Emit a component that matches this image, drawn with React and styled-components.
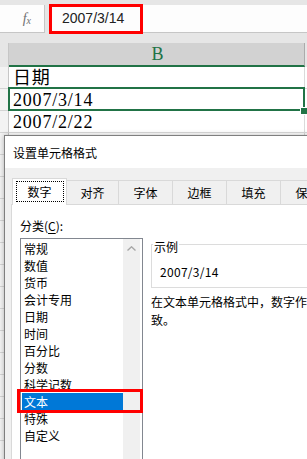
import React from 'react';
import styled, { createGlobalStyle } from 'styled-components';

const GREEN = '#217346';
const UI = '"Noto Sans CJK SC", "Microsoft YaHei", sans-serif';
const CELL = '"Liberation Serif", "Noto Sans CJK SC", serif';

const Global = createGlobalStyle`
  html, body { margin: 0; padding: 0; background: #fff; }
  body { width: 307px; height: 459px; overflow: hidden; font-family: ${UI}; }
  * { box-sizing: border-box; }
`;

const Screen = styled.div`
  position: relative;
  width: 307px;
  height: 459px;
  overflow: hidden;
  background: #fff;
`;

/* ---------- formula bar ---------- */
const Toolbar = styled.div`
  height: 43px;
  padding-top: 5px;
  background: #e6e6e6;
  display: flex;
  align-items: flex-start;
  gap: 4px;
`;

const FxBox = styled.div`
  width: 45px;
  height: 28px;
  background: #fdfdfd;
  border-right: 1px solid #c6c6c6;
  border-bottom: 1px solid #c6c6c6;
  display: flex;
  align-items: center;
  justify-content: flex-end;
  padding-right: 13px;
  font-family: "Liberation Serif", serif;
  font-style: italic;
  font-size: 14px;
  color: #707070;
`;

const FxSub = styled.span`
  font-size: 10px;
  margin-top: 4px;
`;

const InputBox = styled.div`
  position: relative;
  flex: 1;
  height: 28px;
  background: #fdfdfd;
  border-bottom: 1px solid #c6c6c6;
  padding-left: 13px;
  line-height: 27px;
  font-family: "Liberation Sans", sans-serif;
  font-size: 14px;
  color: #222;
`;

const Highlight = styled.div`
  position: absolute;
  left: 0;
  top: -1px;
  width: 94px;
  height: 30px;
  border: 3px solid #f00;
`;

/* ---------- sheet ---------- */
const HeaderRow = styled.div`
  display: flex;
  height: 24px;
  background: #e6e6e6;
`;

const Corner = styled.div`
  width: 9px;
  border-right: 1px solid #c6c6c6;
`;

const ColHead = styled.div`
  width: 296px;
  background: #d2d2d2;
  border-right: 1px solid #ababab;
  border-bottom: 2px solid ${GREEN};
  display: flex;
  align-items: center;
  justify-content: center;
  padding-left: 2px;
  font-family: "Liberation Serif", serif;
  font-size: 18px;
  color: ${GREEN};
`;

const Row = styled.div`
  display: flex;
  height: 22px;
`;

const RowHead = styled.div`
  width: 9px;
  background: #f3f3f3;
  border-right: 1px solid #c6c6c6;
  border-bottom: 1px solid #d4d4d4;
`;

const Cell = styled.div`
  position: relative;
  width: 296px;
  border-right: 1px solid #dadada;
  border-bottom: 1px solid #dadada;
  padding: 1px 0 0 4px;
  font-family: ${CELL};
  font-size: 18px;
  letter-spacing: 0.8px;
  line-height: 21px;
  color: #000;
  white-space: nowrap;

  ${(p) =>
    p.$selected &&
    `
    &::after {
      content: '';
      position: absolute;
      left: -1px;
      top: -2px;
      right: -1px;
      bottom: -1px;
      border: 2px solid ${GREEN};
    }
  `}
`;

const FillHandle = styled.span`
  position: absolute;
  right: -3px;
  bottom: -4px;
  width: 6px;
  height: 6px;
  background: ${GREEN};
  outline: 1px solid #fff;
  z-index: 1;
`;

const NextCol = styled.div`
  flex: 1;
  border-bottom: 1px solid #dadada;
`;

/* ---------- dialog ---------- */
const Dialog = styled.div`
  position: absolute;
  left: 4px;
  top: 135px;
  width: 330px;
  height: 360px;
  border: 1px solid #7f7f7f;
  background: #f0f0f0;
  box-shadow: 0 0 5px rgba(0, 0, 0, 0.28);
  display: flex;
  flex-direction: column;
`;

const TitleBar = styled.div`
  height: 32px;
  background: #fff;
  padding-left: 8px;
  display: flex;
  align-items: center;
  font-size: 12px;
  color: #000;
`;

const Body = styled.div`
  flex: 1;
  padding: 10px 0 0 6px;
  display: flex;
  flex-direction: column;
`;

const TabStrip = styled.div`
  display: flex;
  align-items: flex-end;
  height: 26px;
  padding-left: 1px;
`;

const Tab = styled.div`
  position: relative;
  width: ${(p) => p.$w}px;
  height: ${(p) => (p.$active ? 27 : 24)}px;
  margin-left: ${(p) => (p.$first ? 0 : -1)}px;
  margin-bottom: ${(p) => (p.$active ? -1 : 0)}px;
  z-index: ${(p) => (p.$active ? 1 : 0)};
  background: ${(p) => (p.$active ? '#fff' : '#f0f0f0')};
  border: 1px solid #d9d9d9;
  border-bottom: none;
  display: flex;
  justify-content: center;
  align-items: ${(p) => (p.$active ? 'flex-start' : 'center')};
  padding-top: ${(p) => (p.$active ? 2 : 0)}px;
  font-size: 12px;
  color: #000;
  flex-shrink: 0;
`;

const FocusRing = styled.span`
  width: 48px;
  height: 21px;
  border: 1px dotted #000;
  display: flex;
  align-items: center;
  justify-content: center;
`;

const Panel = styled.div`
  flex: 1;
  background: #fff;
  border: 1px solid #d9d9d9;
  border-right: none;
  padding: 13px 0 0 8px;
  display: flex;
  gap: 8px;
`;

const LeftCol = styled.div`
  width: 123px;
  flex-shrink: 0;
  display: flex;
  flex-direction: column;
`;

const FieldLabel = styled.div`
  font-size: 12px;
  line-height: 16px;
  color: #000;
  u { text-decoration-thickness: 1px; text-underline-offset: 2px; }
`;

const ListBox = styled.div`
  margin-top: 4px;
  height: 240px;
  border: 1px solid #828790;
  background: #fff;
  display: flex;
  padding-right: 2px;
`;

const Items = styled.div`
  width: 102px;
  padding: 1px 0 0 1px;
`;

const Item = styled.div`
  position: relative;
  height: 17px;
  line-height: 17px;
  padding-left: 2px;
  font-size: 12px;
  color: ${(p) => (p.$selected ? '#fff' : '#000')};
  background: ${(p) => (p.$selected ? '#0078d7' : 'transparent')};
  z-index: ${(p) => (p.$selected ? 2 : 0)};

  ${(p) =>
    p.$selected &&
    `
    &::after {
      content: '';
      position: absolute;
      left: -5px;
      top: -4px;
      right: -20px;
      bottom: -3px;
      border: 3px solid #f00;
    }
  `}
`;

const ScrollTrack = styled.div`
  width: 17px;
  background: #f0f0f0;
  display: flex;
  justify-content: center;
  padding-top: 7px;
`;

const RightCol = styled.div`
  flex: 1;
  min-width: 0;
  padding-top: 26px;
`;

const GroupBox = styled.div`
  position: relative;
  height: 44px;
  border: 1px solid #dcdcdc;
  border-right: none;
  padding: 19px 0 0 8px;
  font-size: 12px;
  line-height: 16px;
  letter-spacing: 0.3px;
  color: #000;
`;

const GroupLegend = styled.span`
  position: absolute;
  left: 1px;
  top: -5px;
  padding: 0 1px;
  background: #fff;
  font-size: 12px;
  line-height: 14px;
  letter-spacing: 0;
`;

const Description = styled.div`
  margin-top: 5px;
  font-size: 12px;
  line-height: 18px;
  color: #000;
  white-space: nowrap;
`;

const categories = [
  '常规', '数值', '货币', '会计专用', '日期', '时间',
  '百分比', '分数', '科学记数', '文本', '特殊', '自定义',
];

const tabs = [
  { label: '数字', w: 55 },
  { label: '对齐', w: 53 },
  { label: '字体', w: 55 },
  { label: '边框', w: 55 },
  { label: '填充', w: 55 },
  { label: '保护', w: 55 },
];

const cells = ['日期', '2007/3/14', '2007/2/22', '', '', '', '', '', '', '', '', '', '', '', '', '', '', ''];

export default function App() {
  return (
    <Screen>
      <Global />
      <Toolbar>
        <FxBox>
          f<FxSub>x</FxSub>
        </FxBox>
        <InputBox>
          2007/3/14
          <Highlight />
        </InputBox>
      </Toolbar>

      <HeaderRow>
        <Corner />
        <ColHead>B</ColHead>
      </HeaderRow>

      {cells.map((text, i) => (
        <Row key={i}>
          <RowHead />
          <Cell $selected={i === 1}>
            {text}
            {i === 1 && <FillHandle />}
          </Cell>
          <NextCol />
        </Row>
      ))}

      <Dialog>
        <TitleBar>设置单元格格式</TitleBar>
        <Body>
          <TabStrip>
            {tabs.map((t, i) => (
              <Tab key={t.label} $w={t.w} $first={i === 0} $active={i === 0}>
                {i === 0 ? <FocusRing>{t.label}</FocusRing> : t.label}
              </Tab>
            ))}
          </TabStrip>
          <Panel>
            <LeftCol>
              <FieldLabel>
                分类(<u>C</u>):
              </FieldLabel>
              <ListBox>
                <Items>
                  {categories.map((c) => (
                    <Item key={c} $selected={c === '文本'}>
                      {c}
                    </Item>
                  ))}
                </Items>
                <ScrollTrack>
                  <svg width="9" height="5" viewBox="0 0 9 5">
                    <path d="M0.5 4.5 L4.5 0.8 L8.5 4.5" fill="none" stroke="#a6a6a6" strokeWidth="1.4" />
                  </svg>
                </ScrollTrack>
              </ListBox>
            </LeftCol>
            <RightCol>
              <GroupBox>
                <GroupLegend>示例</GroupLegend>
                2007/3/14
              </GroupBox>
              <Description>
                <div>在文本单元格格式中，数字作为文本处理。单元格显示的内容与输入的内容完全一</div>
                <div>致。</div>
              </Description>
            </RightCol>
          </Panel>
        </Body>
      </Dialog>
    </Screen>
  );
}
